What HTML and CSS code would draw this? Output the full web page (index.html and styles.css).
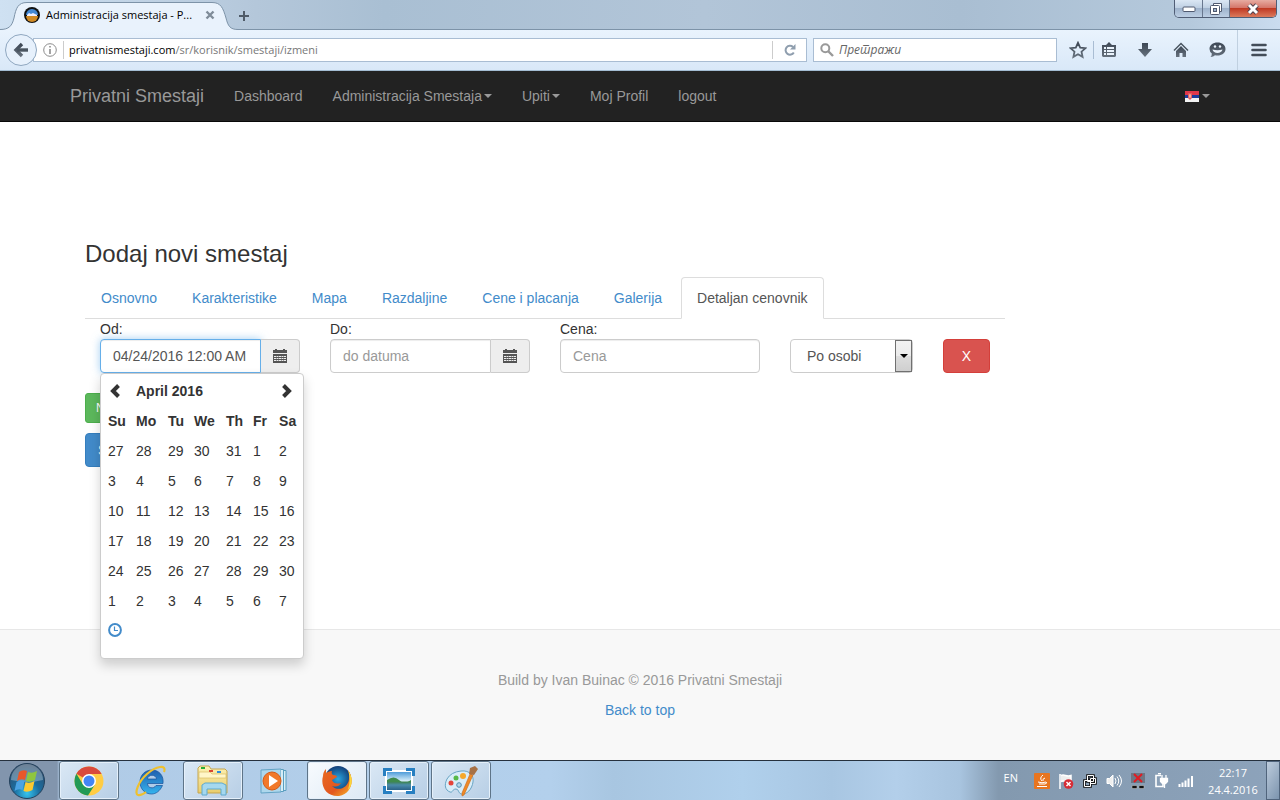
FILE: index.html
```html
<!DOCTYPE html>
<html lang="sr">
<head>
<meta charset="utf-8">
<title>Administracija smestaja - Privatni Smestaji</title>
<link rel="stylesheet" href="styles.css">
</head>
<body>
<svg width="0" height="0" class="defs" aria-hidden="true">
  <defs>
    <linearGradient id="steel" x1="0" y1="0" x2="0" y2="1"><stop offset="0" stop-color="#3d4754"/><stop offset="1" stop-color="#66717d"/></linearGradient>
    <radialGradient id="orb" cx=".5" cy=".85" r=".8"><stop offset="0" stop-color="#35c4ee"/><stop offset=".45" stop-color="#1b6d9f"/><stop offset="1" stop-color="#2f4d6c"/></radialGradient>
    <linearGradient id="ie" x1="0" y1="0" x2="0" y2="1"><stop offset="0" stop-color="#1f5fae"/><stop offset="1" stop-color="#35b4ee"/></linearGradient>
    <linearGradient id="folder" x1="0" y1="0" x2="0" y2="1"><stop offset="0" stop-color="#fdf2b5"/><stop offset="1" stop-color="#e9cd6c"/></linearGradient>
    <linearGradient id="photo" x1="0" y1="0" x2="0" y2="1"><stop offset="0" stop-color="#3f93d6"/><stop offset=".5" stop-color="#d8eef8"/><stop offset=".55" stop-color="#3f8357"/><stop offset=".7" stop-color="#4b8cab"/><stop offset="1" stop-color="#245a80"/></linearGradient>
    <radialGradient id="globe"><stop offset="0" stop-color="#2aa6e0"/><stop offset="1" stop-color="#123e78"/></radialGradient>
    <linearGradient id="fox" x1="0" y1="0" x2="1" y2="1"><stop offset="0" stop-color="#e96a22"/><stop offset=".6" stop-color="#e2571f"/><stop offset="1" stop-color="#f9b92b"/></linearGradient>
    <symbol id="calendar" viewBox="0 0 14 14">
      <path d="M0 1h2V0h2v1h6V0h2v1h2v3H0zM0 5h14v9H0z" fill="#555"/>
      <path d="M1 7.500h12M1 9.500h12M1 11.500h12" stroke="#eee" stroke-width="1" stroke-dasharray="2 .5"/>
    </symbol>
  </defs>
</svg>

<header class="browser">
  <div class="titlebar">
    <div class="tab">
      <svg class="tab-shape" width="238" height="30" viewBox="0 0 238 30"><path d="M0 29.500C9 29.500 12 26 14 18C16 8 18 2.500 27 2.500H212C221 2.500 223 8 226 18C228 26 230 29.500 238 29.500V31H0z" fill="#e9f2fc" stroke="#7d93a8"/></svg>
      <svg class="favicon" width="16" height="16" viewBox="0 0 16 16"><circle cx="8" cy="8" r="8" fill="#111"/><path d="M2 8a6 6 0 0 1 12 0z" fill="#4388d4"/><path d="M2 9a6 6 0 0 0 12 0z" fill="#d18a24"/><path d="M3 8l2-2 2 1 2-1 2 1 2 1v1H3z" fill="#eef"/></svg>
      <span class="tab-title">Administracija smestaja - P...</span>
      <button class="plain tab-close" aria-label="Close tab"><svg width="10" height="10" viewBox="0 0 10 10"><path d="M1.500 1.500l7 7M8.500 1.500l-7 7" stroke="#7f8c99" stroke-width="2.400"/></svg></button>
    </div>
    <button class="plain new-tab" aria-label="New tab"><svg width="12" height="12" viewBox="0 0 12 12"><path d="M6 1v10M1 6h10" stroke="#4f5b68" stroke-width="2"/></svg></button>
    <div class="window-buttons">
      <button class="win" aria-label="Minimize"><svg width="14" height="8" viewBox="0 0 14 8"><rect x="1" y="2" width="12" height="4.500" rx="1" fill="#fff" stroke="#505a70"/></svg></button>
      <button class="win restore" aria-label="Restore"><svg width="14" height="14" viewBox="0 0 14 14"><path d="M4.500 3.500v-2h8v8h-2" fill="#fff" stroke="#505a70"/><rect x="1.500" y="3.500" width="9" height="9" rx="1" fill="#fff" stroke="#505a70"/><rect x="4.500" y="6.500" width="3" height="3" fill="#9db2cc" stroke="#505a70"/></svg></button>
      <button class="win close" aria-label="Close"><svg width="14" height="12" viewBox="0 0 14 12"><path d="M3 2l8 8M11 2l-8 8" stroke="#50424f" stroke-width="5"/><path d="M3 2l8 8M11 2l-8 8" stroke="#fff" stroke-width="3"/></svg></button>
    </div>
  </div>
  <div class="toolbar">
    <button class="back" aria-label="Back"><svg width="16" height="16" viewBox="0 0 16 16"><path d="M9 2L3 8l6 6" fill="none" stroke="url(#steel)" stroke-width="3.400"/><path d="M4 8h11" stroke="#4a5561" stroke-width="3.400"/></svg></button>
    <div class="address">
      <svg width="14" height="14" viewBox="0 0 14 14"><circle cx="7" cy="7" r="6.300" fill="none" stroke="#8c8c8c"/><path d="M7 6v5M7 3v1.600" stroke="#8c8c8c" stroke-width="1.600"/></svg>
      <span class="url"><b>privatnismestaji.com</b>/sr/korisnik/smestaji/izmeni</span>
      <button class="plain reload" aria-label="Reload"><svg width="12" height="12" viewBox="0 0 12 12"><path d="M9.800 8.500A4.400 4.400 0 1 1 9 3" fill="none" stroke="#8f9eae" stroke-width="2"/><path d="M11.500 0v5.500H6z" fill="#8f9eae"/></svg></button>
    </div>
    <label class="search">
      <svg width="14" height="14" viewBox="0 0 14 14"><circle cx="5.300" cy="5.300" r="4" fill="none" stroke="#999" stroke-width="2"/><path d="M8 8l5 5" stroke="#999" stroke-width="2.400"/></svg>
      <input type="text" placeholder="Претражи" aria-label="Претражи">
    </label>
    <nav class="tools">
      <button class="plain star" aria-label="Bookmark"><svg width="18" height="18" viewBox="0 0 18 18"><path d="M9 1.800l2.200 4.800 5.200.6-3.900 3.500 1.100 5.200L9 13.300l-4.600 2.600 1.100-5.200L1.600 7.200l5.200-.6z" fill="none" stroke="url(#steel)" stroke-width="1.800"/></svg></button>
      <button class="plain" aria-label="Bookmarks list"><svg width="16" height="16" viewBox="0 0 16 16"><path d="M1 3h4l3-3 3 3h4v11l-1 1H2l-1-1z" fill="url(#steel)"/><path d="M3 6h2M6 6h7M3 9h2M6 9h7M3 12h2M6 12h7" stroke="#eaf3fc" stroke-width="1.800"/></svg></button>
      <button class="plain" aria-label="Downloads"><svg width="16" height="16" viewBox="0 0 16 16"><path d="M5 1h6v6h4l-7 8-7-8h4z" fill="url(#steel)"/></svg></button>
      <button class="plain" aria-label="Home"><svg width="16" height="16" viewBox="0 0 16 16"><path d="M1 8.500l7-7 7 7" fill="none" stroke="#4a5561" stroke-width="1.500"/><path d="M3 9l5-5 5 5v6H9.500v-4h-3v4H3z" fill="url(#steel)"/></svg></button>
      <button class="plain" aria-label="Chat"><svg width="17" height="16" viewBox="0 0 17 16"><path d="M8.500.5c4.500 0 8 2.600 8 6.500s-3.500 6.500-8 6.500q-1.500 0-2.500-.3Q4.500 15 1.500 15q1.500-1.500 1.300-3.500A6 6 0 0 1 .5 7C.5 3.100 4 .5 8.500.5z" fill="url(#steel)"/><circle cx="6" cy="4.500" r="1.200" fill="#eaf3fc"/><circle cx="11" cy="4.500" r="1.200" fill="#eaf3fc"/><path d="M3.500 7.500q5 1.500 10 0c-.5 4.500-9.500 4.500-10 0z" fill="#eaf3fc"/></svg></button>
      <button class="plain menu" aria-label="Menu"><svg width="16" height="14" viewBox="0 0 16 14"><path d="M1.500 2h13M1.500 7h13M1.500 12h13" stroke="#434d59" stroke-width="2.600" stroke-linecap="round"/></svg></button>
    </nav>
  </div>
</header>

<main class="page">
  <div class="navbar">
    <nav class="container nav">
      <a class="brand" href="#">Privatni Smestaji</a>
      <a href="#">Dashboard</a>
      <a href="#">Administracija Smestaja<i class="caret"></i></a>
      <a href="#">Upiti<i class="caret"></i></a>
      <a href="#">Moj Profil</a>
      <a href="#">logout</a>
      <a class="language" href="#" aria-label="Srpski"><svg width="14" height="11" viewBox="0 0 14 11"><path fill="#e0384a" d="M0 0h14v4H0z"/><path fill="#1d3c9c" d="M0 4h14v3H0z"/><path fill="#f3f3f3" d="M0 7h14v4H0z"/><path d="M3 2h4v5L5 9 3 7z" fill="#e45a5e"/><path d="M5 3v4M4 5h2" stroke="#f5c7b5"/></svg><i class="caret"></i></a>
    </nav>
  </div>

  <section class="container editor">
    <h3>Dodaj novi smestaj</h3>
    <nav class="tabs">
      <a href="#">Osnovno</a>
      <a href="#">Karakteristike</a>
      <a href="#">Mapa</a>
      <a href="#">Razdaljine</a>
      <a href="#">Cene i placanja</a>
      <a href="#">Galerija</a>
      <a class="active" href="#">Detaljan cenovnik</a>
    </nav>
    <form>
      <div class="prices">
        <div class="field">
          <label for="from">Od:</label>
          <div class="group">
            <input class="control focused" id="from" type="text" value="04/24/2016 12:00 AM">
            <button class="addon" type="button" aria-label="Kalendar od"><svg width="14" height="14"><use href="#calendar"/></svg></button>
          </div>
          <div class="picker">
            <table>
              <colgroup><col class="c28"><col class="c32"><col class="c26"><col class="c32"><col class="c27"><col class="c26"><col></colgroup>
              <thead>
                <tr><th><button class="plain" type="button" aria-label="Previous"><svg width="14" height="14" viewBox="0 0 14 14"><path d="M10.500 1.500L5 7l5.500 5.500" fill="none" stroke="#333" stroke-width="4"/></svg></button></th><th colspan="5">April 2016</th><th><button class="plain" type="button" aria-label="Next"><svg width="14" height="14" viewBox="0 0 14 14"><path d="M4.500 1.500L10 7l-5.500 5.500" fill="none" stroke="#333" stroke-width="4"/></svg></button></th></tr>
                <tr><th>Su</th><th>Mo</th><th>Tu</th><th>We</th><th>Th</th><th>Fr</th><th>Sa</th></tr>
              </thead>
              <tbody>
                <tr><td>27</td><td>28</td><td>29</td><td>30</td><td>31</td><td>1</td><td>2</td></tr>
                <tr><td>3</td><td>4</td><td>5</td><td>6</td><td>7</td><td>8</td><td>9</td></tr>
                <tr><td>10</td><td>11</td><td>12</td><td>13</td><td>14</td><td>15</td><td>16</td></tr>
                <tr><td>17</td><td>18</td><td>19</td><td>20</td><td>21</td><td>22</td><td>23</td></tr>
                <tr><td>24</td><td>25</td><td>26</td><td>27</td><td>28</td><td>29</td><td>30</td></tr>
                <tr><td>1</td><td>2</td><td>3</td><td>4</td><td>5</td><td>6</td><td>7</td></tr>
              </tbody>
            </table>
            <button class="plain time" type="button" aria-label="Time"><svg width="14" height="14" viewBox="0 0 14 14"><circle cx="7" cy="7" r="5.900" fill="none" stroke="#428bca" stroke-width="2"/><path d="M6.500 3.500v4H10" fill="none" stroke="#428bca" stroke-width="1.200"/></svg></button>
          </div>
        </div>
        <div class="field">
          <label for="to">Do:</label>
          <div class="group">
            <input class="control" id="to" type="text" placeholder="do datuma">
            <button class="addon" type="button" aria-label="Kalendar do"><svg width="14" height="14"><use href="#calendar"/></svg></button>
          </div>
        </div>
        <div class="field">
          <label for="price">Cena:</label>
          <input class="control" id="price" type="text" placeholder="Cena">
        </div>
        <div class="field last">
          <div class="select"><select aria-label="Vrsta cene"><option>Po osobi</option></select><i class="drop"></i></div>
          <button class="btn danger" type="button">X</button>
        </div>
      </div>
      <div class="actions">
        <button class="btn success" type="button">N</button>
        <button class="btn primary" type="submit">S</button>
      </div>
    </form>
  </section>

  <footer>
    <p>Build by Ivan Buinac © 2016 Privatni Smestaji</p>
    <p><a href="#">Back to top</a></p>
  </footer>
</main>

<div class="taskbar">
  <button class="start" aria-label="Start"><svg width="38" height="38" viewBox="0 0 38 38"><circle cx="19" cy="19" r="17.500" fill="url(#orb)" stroke="#24415c"/><path d="M3 18A16 16 0 0 1 35 18Q19 22 3 18z" fill="#fff" opacity=".3"/><path d="M11 10q4-3 8-1l-2 9q-4-2-8 1z" fill="#e8582a"/><path d="M20 10q4 2 9-1l-2 9q-5 3-9 1z" fill="#8fc63f"/><path d="M8.500 20q4-3 8-1l-2 9q-4-2-8 1z" fill="#4ba3e3"/><path d="M17.500 20q4 2 9-1l-2 9q-5 3-9 1z" fill="#fdc92f"/></svg></button>
  <button class="task framed" aria-label="Chrome"><svg width="30" height="30" viewBox="0 0 30 30"><circle cx="15" cy="15" r="14.500" fill="#fc4"/><path d="M15 15L2.400 7.800A14.500 14.500 0 0 1 27.600 8H15z" fill="#d94a3d"/><path d="M2.400 7.800A14.500 14.500 0 0 0 14 29.500L21 18.500 15 21 9 18.500z" fill="#229a56"/><circle cx="15" cy="15" r="7" fill="#fff"/><circle cx="15" cy="15" r="5.500" fill="#4385f5"/></svg></button>
  <button class="task" aria-label="Internet Explorer"><svg width="32" height="32" viewBox="0 0 32 32"><path d="M28 18.500H12.500c0 4.500 6 6 8.500 2h6.500C25 26 21 29 16.500 29 10 29 5 24 5 17S10 5 17 5s12 5.500 11 13.500zM12.500 14h9c-.5-5-8.500-5-9 0z" fill="url(#ie)" stroke="#17509a" stroke-width=".7"/><path d="M29 7C32-1 21 1 12 9S-1 29 3 30q3 1 8-3" fill="none" stroke="#eec02f" stroke-width="2.200"/></svg></button>
  <button class="task framed" aria-label="Explorer"><svg width="34" height="32" viewBox="0 0 34 32"><path d="M2 28V3l2-2h9l2 3h14l2 2v22z" fill="url(#folder)" stroke="#c5a54f"/><path d="M3 7h11l2 2h14v4H3z" fill="#fff6c9" stroke="#d9bd65" stroke-width=".7"/><path d="M5 2h4v2H5z" fill="#26ad36"/><path d="M13 5h4v2h-4z" fill="#db4532"/><path d="M21 6h4v2h-4z" fill="#2d8bdc"/><path d="M6 30V20l3-2h17l4 2v10h-5v-6H11v6z" fill="#a5d8ef" stroke="#5faacf"/></svg></button>
  <button class="task" aria-label="Media Player"><svg width="32" height="30" viewBox="0 0 32 30"><path d="M2 4l20-1v23L2 27z" fill="#add7ec" stroke="#62a3c5"/><path d="M22 3.500h2.500v22H22M24.500 4.500H27v20h-2.500" fill="#d6edf7" stroke="#5a9ebf"/><circle cx="13" cy="15" r="9" fill="#f1792a" stroke="#d65a16"/><path d="M10 9l9 6-9 6z" fill="#fff"/></svg></button>
  <button class="task framed active" aria-label="Firefox"><svg width="32" height="32" viewBox="0 0 32 32"><circle cx="17" cy="14" r="13" fill="url(#globe)"/><path d="M27 5c7 9 4 24-9 26C6 32-1 22 2 11c0-3 1-5 3-7v4q3-2 6-2-1 3 1 4 4 0 4 2l-5 3q2 5 9 3-3 5-9 3c6 6 16 2 17-7q1-5-1-9z" fill="url(#fox)"/><path d="M27 5c5 7 5 15 0 20q3-11 0-20z" fill="#fbd63b"/></svg></button>
  <button class="task framed" aria-label="Photo Viewer"><svg width="32" height="26" viewBox="0 0 32 26"><path fill="url(#photo)" stroke="#fff" stroke-width="2" d="M3 3h26v20H3z"/><path d="M4 12q7-5 12 0t12 0v2H4z" fill="#3e8b4d"/><path d="M1.500 8V1.500H9M23 1.500h7.500V8M30.500 18v6.500H23M9 24.500H1.500V18" fill="none" stroke="#277fc1" stroke-width="3"/></svg></button>
  <button class="task framed" aria-label="Paint"><svg width="34" height="32" viewBox="0 0 34 32"><path d="M17 6c9-1 13 5 12 11-1 7-6 13-12 12-3-1-2-5-5-5-4 0-3 4-6 3C1 25 0 20 3 14q4-7 14-8z" fill="#d9edf8" stroke="#69a4c4"/><circle cx="7" cy="18" r="2.500" fill="#e4453a"/><circle cx="12" cy="13" r="2.500" fill="#57b947"/><circle cx="19" cy="11" r="3" fill="#f5a82b"/><circle cx="15" cy="20" r="2.300" fill="#b3d8eb" stroke="#4f8db0"/><path d="M26 9l3 1-9 20-2 1v-3z" fill="#ef8a27" stroke="#c76818" stroke-width=".6"/><path d="M25 9l1-6 5-2 3 3-4 6z" fill="#a77145"/></svg></button>
  <div class="tray">
    <span class="lang">EN</span>
    <svg width="16" height="16" viewBox="0 0 16 16"><rect width="16" height="16" rx="1" fill="#e87520"/><path d="M9 2q-4 3-1 6M11 5q-3 1-2 3M4 9q4 1.500 8 0M5 11h6M3 13.500h10M12 9q2 1-1 2" fill="none" stroke="#fff"/></svg>
    <svg width="16" height="16" viewBox="0 0 16 16"><path d="M2 1v15M3 2.500c4-2 5 2 10 0v6c-5 2-6-2-10 0" fill="#eee" stroke="#fff" stroke-width="1.500"/><circle cx="10.500" cy="11" r="4.800" fill="#d62c36"/><path d="M8.500 9l4 4M12.500 9l-4 4" stroke="#fff" stroke-width="1.500"/></svg>
    <svg width="16" height="16" viewBox="0 0 16 16"><path d="M5.500 2.500h6v6h-6zM8.500 5.500h5v5h-5zM2.500 7.500h6v6h-6z" fill="#8ba1b8" stroke="#111" stroke-width="2.600"/><path d="M5.500 2.500h6v6h-6zM8.500 5.500h5v5h-5zM2.500 7.500h6v6h-6z" fill="none" stroke="#fff"/></svg>
    <svg width="16" height="16" viewBox="0 0 16 16"><path d="M1 5.500h2.500L7 2v12l-3.500-3.500H1z" fill="#eee" stroke="#fff"/><path d="M9 5q2 3 0 6M11 3.500q3.500 4.500 0 9M13 2q5 6 0 12" fill="none" stroke="#fff"/></svg>
    <svg width="16" height="16" viewBox="0 0 16 16"><path fill="#6d7784" d="M1 0h14v10H1z"/><path d="M4 1l8 8M12 1l-8 8" stroke="#e11b22" stroke-width="2"/><path d="M2 12.500h5v3H2zM9 12.500h5v3H9z" fill="#111" stroke="#bbb" stroke-width=".6"/></svg>
    <svg width="16" height="16" viewBox="0 0 16 16"><path d="M7 2.500H2v11h7v-3M4 .5h3" fill="none" stroke="#fff" stroke-width="1.600"/><path d="M6.500 5.500h7v3l-2 2h-3l-2-2zM8 2v3M12 2v3M10.500 11v4" fill="#fff" stroke="#fff" stroke-width="1.300"/></svg>
    <svg width="16" height="16" viewBox="0 0 16 16"><path d="M1.500 14v-3M4.500 14V9.500M7.500 14V7.500M10.500 14V5.500M14 14V3" stroke="#fff" stroke-width="2"/></svg>
    <time><span>22:17</span><span>24.4.2016</span></time>
  </div>
  <button class="desktop" aria-label="Show desktop"></button>
</div>
</body>
</html>
```

FILE: styles.css
```css
* { box-sizing: border-box; }

body {
  margin: 0;
  min-height: 100vh;
  display: flex;
  flex-direction: column;
  font: 14px/20px "Liberation Sans", Arial, sans-serif;
  color: #333;
  background: #fff;
}

button, input, select { font: inherit; color: inherit; margin: 0; }
a { color: #428bca; text-decoration: none; }
svg { display: block; flex: none; }
.defs { position: absolute; }
.plain { border: 0; padding: 0; background: none; display: flex; align-items: center; justify-content: center; }

/* Browser window */
.browser { font: 11px/16px "Open Sans", "Noto Sans", sans-serif; }
.titlebar {
  height: 30px;
  display: flex;
  align-items: center;
  border-bottom: 1px solid #7d93a8;
  background: linear-gradient(90deg, #cfe1f2, #b4c7da 20%, #a9bfd3 30%, #b2c5d8 55%, #a9bed2 75%, #b5c9dc 93%, #cadcef);
}
.tab { position: relative; width: 238px; height: 30px; display: flex; align-items: center; padding-left: 24px; margin-bottom: -1px; }
.tab-shape { position: absolute; inset: 0; }
.favicon, .tab-title, .tab-close { position: relative; }
.tab-title { margin-left: 6px; width: 154px; color: #000; white-space: nowrap; }
.tab-close { margin-left: 5px; }
.tab, .new-tab { flex: none; }
.new-tab { width: 12px; margin-top: 2px; }
.window-buttons { display: flex; align-self: flex-start; margin: 0 3px 0 auto; height: 18px; border: 1px solid #505d75; border-top: 0; border-radius: 0 0 5px 5px; overflow: hidden; }
.win { width: 28px; border: 0; border-right: 1px solid #68778e; padding: 0; display: flex; align-items: center; justify-content: center; background: linear-gradient(#dbe7f4, #bfd0e3 45%, #9fb3cc 50%, #bccee3); }
.restore { width: 27px; }
.close { width: 46px; border: 0; background: linear-gradient(#e7aca2, #d5766a 45%, #c03a24 50%, #dc7a5c); }

.toolbar { height: 41px; display: flex; align-items: center; padding-left: 5px; background: linear-gradient(#e9f3fd, #d9e8f8); border-bottom: 1px solid #a3bcd3; }
.back { position: relative; width: 32px; height: 32px; flex: none; border: 1px solid #8fa7c0; border-radius: 50%; padding: 0; display: flex; align-items: center; justify-content: center; background: #e7f1fc; }
.address { flex: 1; height: 24px; margin-left: -4px; padding-left: 9px; display: flex; align-items: center; background: #fff; border: 1px solid #a9bdd3; }
.url { margin-left: 6px; padding-left: 5px; border-left: 1px solid #ccc; color: #777; line-height: 18px; }
.url b { font-weight: 400; color: #000; }
.reload { margin-left: auto; width: 34px; height: 18px; border-left: 1px solid #ccc; }
.search { width: 244px; height: 24px; margin-left: 6px; padding: 0 6px; display: flex; align-items: center; gap: 5px; background: #fff; border: 1px solid #a9bdd3; }
.search input { flex: 1; min-width: 0; border: 0; padding: 0; outline: 0; font-size: 12px; font-style: italic; }
.search input::placeholder { color: #666; opacity: 1; }
.tools { display: flex; align-items: center; align-self: stretch; padding-left: 3px; }
.tools button { width: 36px; height: 18px; }
.tools .star { border-right: 1px solid #a9bdd3; width: 34px; margin-right: -3px; padding-left: 2px; }
.tools .menu { width: 43px; align-self: stretch; height: auto; border-left: 1px solid #c0d0e0; margin-left: 2px; }

/* Web page */
.page { flex: 1; display: flex; flex-direction: column; }
.container { width: 100%; max-width: 1170px; margin: 0 auto; padding: 0 15px; }
.navbar { background: #222; border-bottom: 1px solid #080808; }
.nav { display: flex; }
.nav a { padding: 15px; color: #999; display: flex; align-items: center; }
.nav .brand { padding-left: 0; font-size: 18px; }
.nav .language { margin-left: auto; padding-right: 0; }
.caret { border: 4px solid transparent; border-top-color: #999; border-bottom: 0; margin-left: 2px; }
.language .caret { margin-left: 3px; }

.editor { padding: 118px 30px 162px; }
h3 { margin: 0 0 10px; font-size: 24px; font-weight: 400; line-height: 27px; }
.editor > nav, form { max-width: 920px; }
.tabs { display: flex; gap: 3px; border-bottom: 1px solid #ddd; }
.tabs a { padding: 10px 15px; border: 1px solid transparent; border-radius: 4px 4px 0 0; margin-bottom: -1px; }
.tabs .active { color: #555; background: #fff; border-color: #ddd #ddd #fff; }

.prices { display: grid; grid-template-columns: repeat(4, 1fr); }
.field { position: relative; padding: 0 15px; }
.field label { display: block; }
.control { width: 100%; height: 34px; padding: 6px 12px; border: 1px solid #ccc; border-radius: 4px; color: #555; background: #fff; box-shadow: inset 0 1px 1px #00000013; outline: 0; }
.control::placeholder { color: #999; opacity: 1; }
.group { display: flex; }
.group .control { flex: 1; min-width: 0; border-radius: 4px 0 0 4px; }
.focused { border-color: #66afe9; box-shadow: inset 0 1px 1px #00000013, 0 0 8px #66afe999; }
.addon { width: 39px; padding: 0; border: 1px solid #ccc; border-left: 0; border-radius: 0 4px 4px 0; background: #eee; display: flex; align-items: center; justify-content: center; }
.last { display: flex; gap: 30px; padding: 20px 0 0 15px; }
.select { position: relative; width: 123px; }
.select select { width: 100%; height: 34px; appearance: none; padding: 6px 16px; border: 1px solid #ccc; border-radius: 4px; background: #fff; color: #555; }
.drop { position: absolute; right: 1px; top: 1px; width: 17px; height: 32px; display: grid; place-items: center; border: 1px solid #707070; background: linear-gradient(#f2f2f2, #ebebeb 50%, #ddd 50%, #cfcfcf); pointer-events: none; }
.drop::before { content: ""; border: 4px solid transparent; border-top-color: #000; border-bottom: 0; }

.btn { height: 34px; padding: 6px 12px; border: 1px solid; border-radius: 4px; color: #fff; text-align: left; }
.danger { width: 47px; text-align: center; background: #d9534f; border-color: #d43f3a; }
.actions { display: flex; flex-direction: column; align-items: flex-start; gap: 10px; padding-top: 20px; }
.success { height: 30px; padding: 5px 10px; font-size: 12px; line-height: 18px; border-radius: 3px; background: #5cb85c; border-color: #4cae4c; }
.primary { background: #428bca; border-color: #357ebd; }

.picker { position: absolute; z-index: 2; left: 15px; top: 54px; width: 204px; padding: 2px 0 14px 7px; background: #fff; border: 1px solid #ccc; border-radius: 4px; box-shadow: 0 6px 12px #0000002d; }
.picker table { width: 100%; table-layout: fixed; border-collapse: collapse; }
.picker th, .picker td { padding: 5px 0; height: 30px; text-align: left; white-space: nowrap; }
.c28 { width: 28px; } .c32 { width: 32px; } .c26 { width: 26px; } .c27 { width: 27px; }
.time { height: 28px; }

footer { flex: 1; padding: 40px 0 30px; text-align: center; color: #999; background: #f8f8f8; border-top: 1px solid #e7e7e7; }
footer p { margin: 0 0 10px; }

/* Desktop taskbar */
.taskbar { height: 40px; display: flex; align-items: stretch; gap: 2px; border-top: 1px solid #26313e; background: linear-gradient(90deg, #8295ad 0, #8295ad 57px, #b0cbe6 60px, #b3d0ec 43%, #a8c6e1 48%, #b0d0ec 58%, #a8c6e2 65%, #b3cfea 70%, #a8c4df 75%, #8399af 78%, #8da3bb); }
.taskbar button { padding: 0; border: 1px solid transparent; background: none; display: flex; align-items: center; justify-content: center; }
.taskbar .start { width: 57px; padding-right: 4px; }
.taskbar .task { width: 60px; }
.taskbar .framed { border-color: #5e7488; border-radius: 3px; background: linear-gradient(135deg, #dae8f5, #b7cee5); box-shadow: inset 0 0 0 1px #e5f0fa; }
.taskbar .active { background: linear-gradient(135deg, #f8fbfe, #dce9f5); }
.tray { margin-left: auto; display: flex; align-items: center; gap: 8px; color: #fff; font: 11px/17px "Open Sans", "Noto Sans", sans-serif; }
.lang { margin: 0 8px 6px 0; }
time { width: 62px; text-align: center; }
time span { display: block; }
.taskbar .desktop { width: 14px; border-color: #50647c; background: linear-gradient(120deg, #bccbdc, #7c94ae); }
```
